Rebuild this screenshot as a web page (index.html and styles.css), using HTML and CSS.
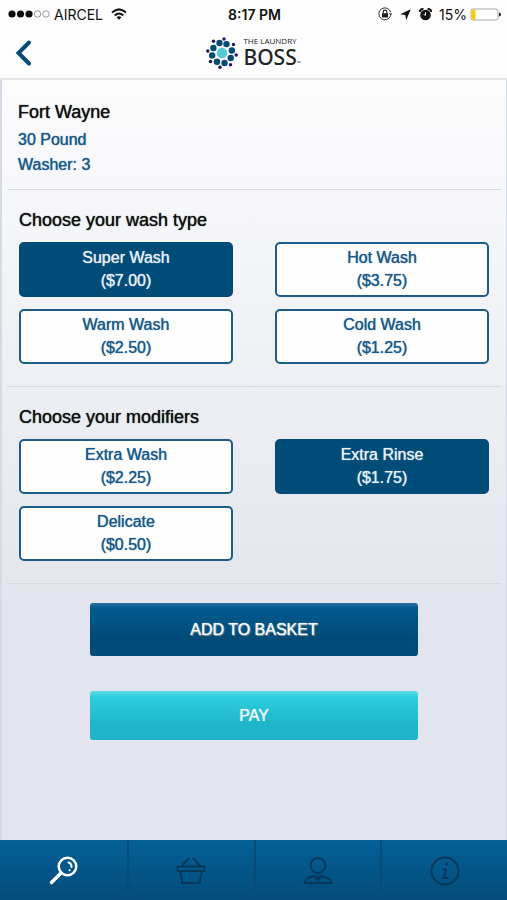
FILE: index.html
```html
<!DOCTYPE html>
<html lang="en">
<head>
<meta charset="utf-8">
<meta name="viewport" content="width=device-width, initial-scale=1">
<title>The Laundry Boss</title>
<link rel="stylesheet" href="styles.css">
</head>
<body>
<header class="top">
  <div class="status">
    <div class="status-side">
      <svg width="42" height="10" viewBox="0 0 42 10" aria-hidden="true">
        <g fill="#0b0b0b"><circle cx="4" cy="5" r="3.6"/><circle cx="12.5" cy="5" r="3.6"/><circle cx="21" cy="5" r="3.6"/></g>
        <g fill="none" stroke="#999" stroke-width="1"><circle cx="29.500" cy="5" r="3.200"/><circle cx="38" cy="5" r="3.200"/></g>
      </svg>
      <span class="carrier">AIRCEL</span>
      <svg class="wifi" width="16" height="12" viewBox="0 0 16 12" aria-hidden="true">
        <g fill="none" stroke="#111" stroke-width="2"><path d="M1 4.600Q8-1.800 15 4.600"/><path d="M3.700 7.500Q8 3.500 12.300 7.500"/></g>
        <path d="M5.500 9.200Q8 7.200 10.500 9.200L8 11.800Z" fill="#111"/>
      </svg>
    </div>
    <time class="clock">8:17 PM</time>
    <div class="status-side status-right">
      <svg width="14" height="14" viewBox="0 0 14 14" aria-hidden="true">
        <path d="M12.600 8.500A6 6 0 1 1 12.700 5.600" fill="none" stroke="#333" stroke-width="1"/>
        <path d="M11 6.400h3.400l-1.700 2.400z" fill="#333"/>
        <rect x="4" y="6.300" width="6" height="4.300" rx=".5" fill="#222"/>
        <path d="M5.200 6.500V5a1.800 1.800 0 0 1 3.600 0v1.500" fill="none" stroke="#222" stroke-width="1.200"/>
      </svg>
      <svg class="arrow" width="11" height="11" viewBox="0 0 11 11" aria-hidden="true"><path d="M10.800.2 6.200 10.900 5.300 5.900.1 5.200Z" fill="#111"/></svg>
      <svg class="alarm" width="13" height="13" viewBox="0 0 13 13" aria-hidden="true">
        <circle cx="6.500" cy="7" r="5.300" fill="#111"/>
        <path d="M.8 3.900A2.700 2.700 0 0 1 4.400 1.300M8.600 1.300a2.700 2.700 0 0 1 3.600 2.600" fill="none" stroke="#111" stroke-width="2"/>
        <path d="M6.500 4.200v3.100L4.600 6.400" fill="none" stroke="#fff" stroke-width="1"/>
      </svg>
      <span>15%</span>
      <svg class="battery" width="31" height="13" viewBox="0 0 31 13" aria-hidden="true">
        <rect x="1" y="1" width="27" height="11" rx="2" fill="#fff" stroke="#aaa"/>
        <path d="M3 1.500h2.500v10H3A1.500 1.500 0 0 1 1.500 10V3A1.500 1.500 0 0 1 3 1.500z" fill="#fdc70c"/>
        <path d="M29 4.500a2 2 0 0 1 0 4z" fill="#222"/>
      </svg>
    </div>
  </div>
  <nav class="bar">
    <a class="back" href="#" aria-label="Back">
      <svg width="18" height="28" viewBox="0 0 18 28" aria-hidden="true"><path d="M14 3.500 3.500 14 14 24.500" fill="none" stroke="#064b78" stroke-width="4" stroke-linecap="round"/></svg>
    </a>
    <a class="brand" href="#">
      <svg width="32" height="32" viewBox="-16 -16 32 32" aria-hidden="true">
        <circle r="5.300" fill="#55c9d6"/>
        <g fill="#064b78"><circle cx="-2.500" cy="-10" r="3.200"/><circle cx="4.500" cy="-8.900" r="3.200"/><circle cx="9.900" cy="-2.500" r="3.200"/><circle cx="8.700" cy="5" r="3.200"/><circle cx="2.500" cy="10" r="3.200"/><circle cx="-5" cy="8.800" r="3.200"/><circle cx="-9.800" cy="2.400" r="3.200"/><circle cx="-8.600" cy="-5" r="3.200"/></g>
        <g fill="#1d1468"><circle cx="2" cy="-14" r="1.700"/><circle cx="11.500" cy="-8.500" r="1.700"/><circle cx="14.200" cy="2" r="1.700"/><circle cx="8.500" cy="11.700" r="1.700"/><circle cx="-2" cy="14.200" r="1.700"/><circle cx="-11.500" cy="8.500" r="1.700"/><circle cx="-14.200" cy="-2" r="1.700"/><circle cx="-8.500" cy="-11.700" r="1.700"/></g>
      </svg>
      <span class="brand-text"><span class="brand-small">THE LAUNDRY</span><span class="brand-big">BOSS<span class="tm">™</span></span></span>
    </a>
  </nav>
</header>
<main class="page">
  <section class="section place">
    <h1>Fort Wayne</h1>
    <p>30 Pound</p>
    <p>Washer: 3</p>
  </section>
  <section class="section">
    <h2>Choose your wash type</h2>
    <div class="options">
      <button class="option" type="button" aria-pressed="true">Super Wash<br>($7.00)</button>
      <button class="option" type="button" aria-pressed="false">Hot Wash<br>($3.75)</button>
      <button class="option" type="button" aria-pressed="false">Warm Wash<br>($2.50)</button>
      <button class="option" type="button" aria-pressed="false">Cold Wash<br>($1.25)</button>
    </div>
  </section>
  <section class="section">
    <h2>Choose your modifiers</h2>
    <div class="options">
      <button class="option" type="button" aria-pressed="false">Extra Wash<br>($2.25)</button>
      <button class="option" type="button" aria-pressed="true">Extra Rinse<br>($1.75)</button>
      <button class="option" type="button" aria-pressed="false">Delicate<br>($0.50)</button>
    </div>
  </section>
  <div class="actions">
    <button class="action add" type="button">ADD TO BASKET</button>
    <button class="action pay" type="button">PAY</button>
  </div>
</main>
<nav class="tabs">
  <a class="tab active" href="#" aria-label="Search">
    <svg width="30" height="30" viewBox="0 0 30 30" aria-hidden="true"><circle cx="18.500" cy="10.500" r="8.800"/><path d="m12 17-9.500 9.500" stroke-width="3.500"/><path d="M19.500 6.500a4.500 4.500 0 0 1 3 4.500M20.500 14.200l.1-.1" stroke-width="2"/></svg>
  </a>
  <a class="tab" href="#" aria-label="Basket">
    <svg width="30" height="30" viewBox="0 0 30 30" aria-hidden="true"><path d="M1.500 10.500h27v4.500h-27zM4 15l2.500 12h17L26 15M5.500 10.500 12.500 2.500M24.500 10.500 17.500 2.500"/></svg>
  </a>
  <a class="tab" href="#" aria-label="Account">
    <svg width="30" height="30" viewBox="0 0 30 30" aria-hidden="true"><circle cx="15" cy="9.500" r="7.500"/><path d="M1.500 27c1-4 4-5 9-7 2-.6 2.500 1.500 4.500 1.500s2.500-2.100 4.500-1.500c5 2 8 3 9 7zM11.500 21l3.500 3 3.500-3"/></svg>
  </a>
  <a class="tab" href="#" aria-label="Information">
    <svg width="30" height="30" viewBox="0 0 30 30" aria-hidden="true"><circle cx="15" cy="15" r="13.500"/><circle cx="16.500" cy="8" r=".6"/><path d="M12.500 13.500h3.500l-2 8.500h3.500M12.500 22h2"/></svg>
  </a>
</nav>
</body>
</html>
```
FILE: styles.css
```css
* { box-sizing: border-box; }

body {
  margin: 0;
  min-height: 100vh;
  display: flex;
  flex-direction: column;
  font-family: "Liberation Sans", Arial, sans-serif;
  color: #111;
}

h1, h2, p { margin: 0; }
svg { display: block; flex: none; }

.top {
  background: #fdfdfd;
  border-bottom: 2px solid #e6e7eb;
}

.status {
  display: grid;
  grid-template-columns: 1fr auto 1fr;
  align-items: center;
  height: 28px;
  padding: 0 6px 0 8px;
  font-family: Inter, sans-serif;
  font-size: 14px;
}

.status-side { display: flex; align-items: center; }
.status-right { justify-content: flex-end; }
.carrier { margin-left: 4px; }
.wifi { margin-left: 8px; }
.arrow { margin: 0 8px; }
.alarm { margin-right: 7px; }
.battery { margin-left: 3px; }
.clock { font-weight: 600; }

.bar {
  display: grid;
  grid-template-columns: 1fr auto 1fr;
  align-items: center;
  height: 50px;
  padding: 0 15px;
}

.brand {
  display: flex;
  align-items: center;
  gap: 5px;
  color: #222;
  text-decoration: none;
}

.brand-text { display: flex; flex-direction: column; }
.brand-small { font: 8px/8px "Open Sans", sans-serif; }
.brand-big { font: 500 21px/24px "Noto Sans", sans-serif; }
.tm { font-size: 5px; line-height: 5px; }

.page {
  flex: 1;
  padding: 0 5px;
  border: solid #d5dae4;
  border-width: 0 1px 0 2px;
  background: linear-gradient(#fcfcfd, #e2e5ed 70%);
}

.section {
  padding: 17px 12px 22px;
  border-bottom: 1px solid #d6d9dd;
}

.place { padding: 19px 11px 12px; }
h1, h2 { font-size: 18px; line-height: 26px; font-weight: 400; }
h1 { margin-bottom: 2px; }
.place p { font-size: 16px; line-height: 25px; color: #19588a; }

h1, h2, .place p, .option { text-shadow: 0 0 1px currentColor; }

.options {
  display: grid;
  grid-template-columns: 1fr 1fr;
  gap: 12px 42px;
  margin-top: 9px;
}

.option {
  height: 55px;
  padding: 0 0 1px;
  border: 2px solid #1c5c87;
  border-radius: 5px;
  background: #fefefe;
  color: #19588a;
  font: inherit;
  font-size: 16px;
  line-height: 23px;
}

.option[aria-pressed="true"] {
  border-color: #004c78;
  background: #004c78;
  color: #e6f1f8;
}

.actions {
  display: flex;
  flex-direction: column;
  gap: 35px;
  margin: 0 83px;
  padding: 19px 0;
}

.action {
  height: 49px;
  border: 0;
  border-radius: 3px;
  font: inherit;
  font-size: 16px;
  color: #f2fbff;
  text-shadow: 0 0 1px currentColor;
}

.add {
  height: 53px;
  background: linear-gradient(#2870a0, #045b91 5px, #004b78 65%);
  text-shadow: 0 0 1px currentColor, 1px 1px 1px #8b8f92;
}

.pay { background: linear-gradient(#5edce8, #2dcfdf 6px, #20b6c9 65%); }

.tabs {
  display: grid;
  grid-template-columns: repeat(4, 1fr);
  height: 60px;
  background: linear-gradient(#046097, #034c7a);
}

.tab {
  display: flex;
  align-items: center;
  justify-content: center;
  padding-top: 2px;
  border-left: 2px solid #074b76;
  color: #06385a;
}

.tab:first-child { border-left-color: transparent; }
.tab.active { color: #fff; }

.tab svg {
  fill: none;
  stroke: currentColor;
  stroke-width: 2;
  stroke-linecap: round;
  stroke-linejoin: round;
}

.tab.active svg { stroke-width: 2.5; }
```
